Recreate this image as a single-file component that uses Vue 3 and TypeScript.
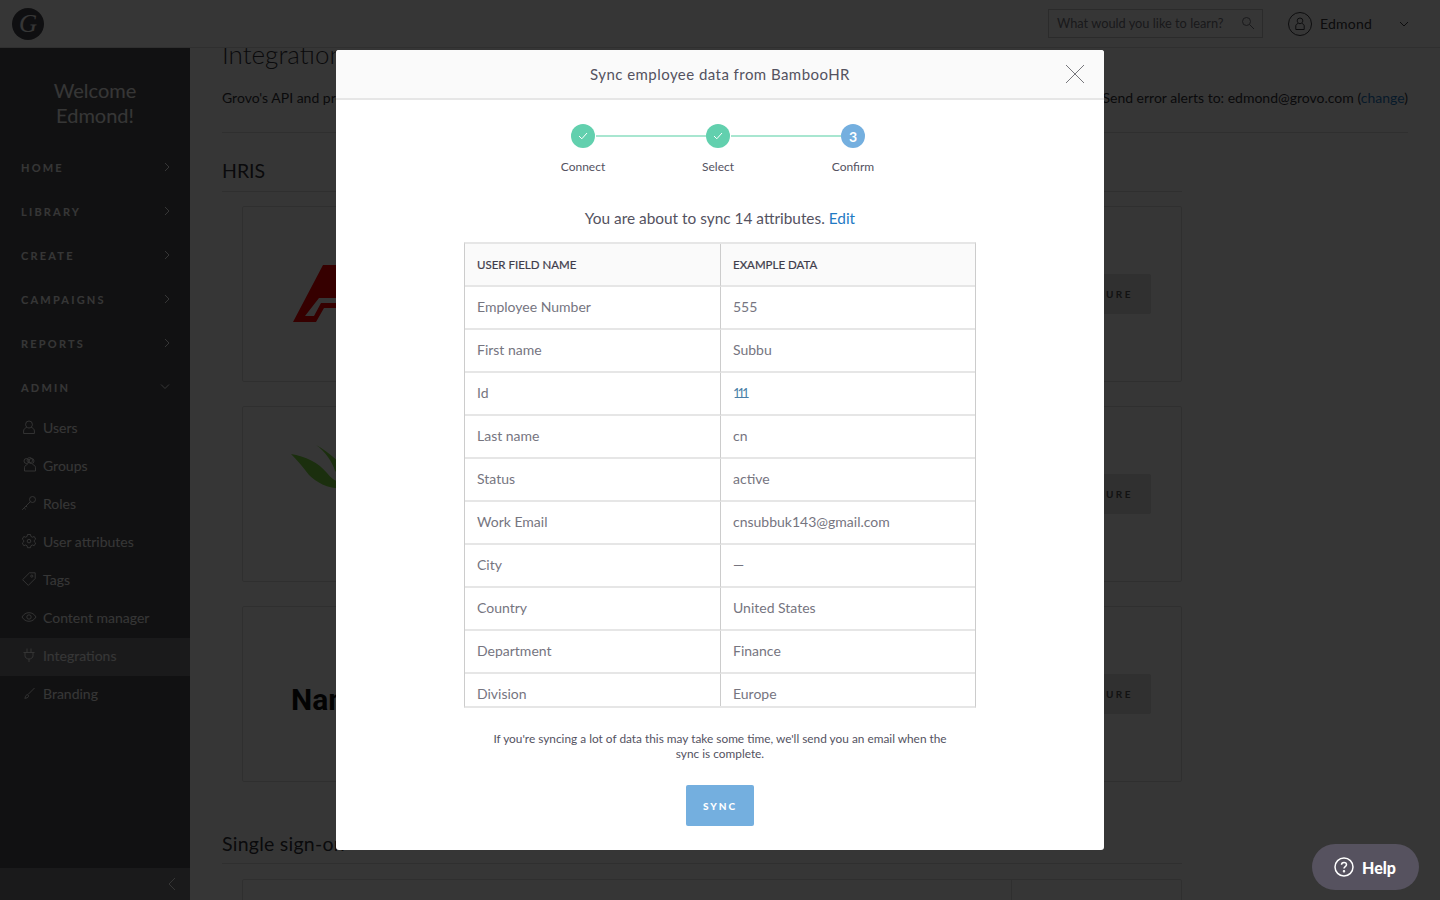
<script setup lang="ts">
interface NavItem {
  label: string;
  open?: boolean;
}

interface SubItem {
  label: string;
  icon: string;
  active?: boolean;
}

interface Step {
  label: string;
  done: boolean;
}

const navItems: NavItem[] = [
  { label: "Home" },
  { label: "Library" },
  { label: "Create" },
  { label: "Campaigns" },
  { label: "Reports" },
  { label: "Admin", open: true },
];

const subItems: SubItem[] = [
  { label: "Users", icon: "M8 2a3.400 3.400 0 0 1 3.400 3.400c0 1.900-1.500 3.600-3.400 3.600S4.600 7.300 4.600 5.400A3.400 3.400 0 0 1 8 2zM5.800 8.400C4 9 2.600 10.200 2.600 12v2.500h10.800V12c0-1.800-1.400-3-3.200-3.600" },
  { label: "Groups", icon: "M10.500 1.500a2.500 2.500 0 1 1 0 5 2.500 2.500 0 0 1 0-5zM5.500 1.500a2.500 2.500 0 1 0 0 5 2.500 2.500 0 0 0 0-5zM8.500 6a2.700 2.700 0 1 1 .5 0M6.500 7.500c-1.800.5-3 1.600-3 3.200v3.300h11v-3.300c0-1.600-1.200-2.700-3-3.200" },
  { label: "Roles", icon: "M11.500 1.500a3 3 0 1 1 0 6 3 3 0 0 1 0-6zM9.300 6.700 1.200 14.800M3.200 12.800l1.600 1.600M5 11l1.200 1.200" },
  { label: "User attributes", icon: "M6.500 1.500h3l.4 1.900 1.500.8 1.800-.7 1.500 2.600-1.400 1.200v1.600l1.400 1.200-1.500 2.600-1.800-.7-1.500.8-.4 1.900h-3l-.4-1.900-1.500-.8-1.800.7-1.500-2.600 1.400-1.200V7.300L1.300 6.100l1.500-2.600 1.800.7 1.500-.8zM8 6.300a1.800 1.800 0 1 0 0 3.600 1.800 1.800 0 0 0 0-3.600z" },
  { label: "Tags", icon: "M8.500 1.800h5.700v5.700L7.300 14.400 1.600 8.700zM10.800 4a1.100 1.100 0 1 0 0 2.200 1.100 1.100 0 0 0 0-2.200z" },
  { label: "Content manager", icon: "M1 8c1.700-2.800 4-4.300 7-4.300S13.300 5.200 15 8c-1.700 2.800-4 4.300-7 4.300S2.700 10.800 1 8zM8 5.800a2.200 2.200 0 1 0 0 4.400 2.200 2.200 0 0 0 0-4.400z" },
  { label: "Integrations", icon: "M6 1.500v4M10 1.500v4M2.500 5.500h11M4 5.500v3.200c0 2 1.800 3.300 4 3.300s4-1.300 4-3.300V5.500M8 12v3", active: true },
  { label: "Branding", icon: "M13.500 3 7 9.500M6.800 9.800C5 9.800 4.500 11 4.300 12.300l-.5 1 1.200-.2c1.400-.2 2.600-1 2.600-2.500z" },
];

const steps: Step[] = [
  { label: "Connect", done: true },
  { label: "Select", done: true },
  { label: "Confirm", done: false },
];

const attributes: [string, string][] = [
  ["Employee Number", "555"],
  ["First name", "Subbu"],
  ["Id", "111"],
  ["Last name", "cn"],
  ["Status", "active"],
  ["Work Email", "cnsubbuk143@gmail.com"],
  ["City", "—"],
  ["Country", "United States"],
  ["Department", "Finance"],
  ["Division", "Europe"],
];
</script>

<template>
  <div class="app">
    <header class="topbar">
      <div class="logo"><span>G</span></div>
      <div class="search">
        <span>What would you like to learn?</span>
        <svg width="14" height="14" viewBox="0 0 14 14" fill="none" stroke="currentColor">
          <circle cx="5.500" cy="5.500" r="4" />
          <path d="m8.500 8.500 4.500 4.500" />
        </svg>
      </div>
      <div class="user">
        <svg width="24" height="24" viewBox="0 0 24 24" fill="none" stroke="currentColor">
          <circle cx="12" cy="12" r="11.500" />
          <path d="M12 6a2.800 2.800 0 0 1 2.800 2.800c0 1.500-1.200 2.900-2.800 2.900s-2.800-1.400-2.800-2.900A2.800 2.800 0 0 1 12 6zM10 11.500c-1.400.4-2.200 1.300-2.200 2.500v3.500h8.400V14c0-1.200-.8-2.100-2.200-2.500" />
        </svg>
        <span class="user-name">Edmond</span>
        <svg class="user-chevron" width="10" height="6" viewBox="0 0 10 6" fill="none" stroke="currentColor">
          <path d="m1 1 4 4 4-4" />
        </svg>
      </div>
    </header>

    <div class="body">
      <aside class="sidebar">
        <div class="welcome">Welcome<br />Edmond!</div>
        <nav class="nav">
          <div v-for="item in navItems" :key="item.label" class="nav-item">
            <span>{{ item.label }}</span>
            <svg v-if="item.open" width="10" height="6" viewBox="0 0 10 6" fill="none" stroke="currentColor">
              <path d="m1 .5 4 4 4-4" />
            </svg>
            <svg v-else width="6" height="10" viewBox="0 0 6 10" fill="none" stroke="currentColor">
              <path d="m1 1 4 4-4 4" />
            </svg>
          </div>
        </nav>
        <div class="subnav">
          <div
            v-for="item in subItems"
            :key="item.label"
            class="sub-item"
            :class="{ active: item.active }"
          >
            <svg width="16" height="16" viewBox="0 0 16 16" fill="none" stroke="currentColor" stroke-width="0.9">
              <path :d="item.icon" />
            </svg>
            <span>{{ item.label }}</span>
          </div>
        </div>
        <div class="sidebar-foot">
          <svg width="8" height="14" viewBox="0 0 8 14" fill="none" stroke="currentColor">
            <path d="M7 1 1 7l6 6" />
          </svg>
        </div>
      </aside>

      <main class="main">
        <h1 class="page-title">Integrations</h1>
        <div class="page-intro">
          <span>Grovo's API and pre-built integrations connect your existing systems.</span>
          <span>Send error alerts to: edmond@grovo.com (<a class="page-link">change</a>)</span>
        </div>

        <section class="section">
          <h2>HRIS</h2>
          <div class="card">
            <svg class="logo-a" width="60" height="58" viewBox="0 0 60 58">
              <path d="M0 57 30 0H60V33H26L12 51H21L28 38H60V43H31L23 57z" fill="#f00" />
            </svg>
            <button class="configure">Configure</button>
          </div>
          <div class="card">
            <svg class="logo-leaf" width="60" height="50" viewBox="0 0 60 50">
              <path d="M0 9C14 11 28 18 36 28 40 33 44 36 50 38L60 38V43C40 46 26 38 18 30 12 22 6 15 0 9z" fill="#7fdc44" />
              <path d="M25 0C34 6 42 18 44 26L60 38V30C50 18 38 7 25 0z" fill="#7fdc44" />
            </svg>
            <button class="configure">Configure</button>
          </div>
          <div class="card">
            <span class="logo-namely">Namely</span>
            <button class="configure">Configure</button>
          </div>
        </section>

        <section class="section sso">
          <h2>Single sign-on</h2>
          <div class="card card-split"><div class="split"></div></div>
        </section>
      </main>
    </div>

    <div class="overlay">
      <div class="modal">
        <div class="modal-head">
          <span>Sync employee data from BambooHR</span>
          <svg class="close" width="20" height="20" viewBox="0 0 20 20" fill="none" stroke="currentColor">
            <path d="m1 1 18 18M19 1 1 19" />
          </svg>
        </div>

        <div class="stepper">
          <div v-for="(step, i) in steps" :key="step.label" class="step">
            <div class="step-dot" :class="{ done: step.done }">
              <svg v-if="step.done" width="10" height="8" viewBox="0 0 10 8" fill="none" stroke="#fff">
                <path d="m1 4 2.800 2.800L9 1" />
              </svg>
              <span v-else>{{ i + 1 }}</span>
            </div>
            <div class="step-label">{{ step.label }}</div>
          </div>
        </div>

        <p class="sync-intro">You are about to sync 14 attributes. <a>Edit</a></p>

        <div class="table-wrap">
          <table class="attr-table">
            <thead>
              <tr>
                <th>USER FIELD NAME</th>
                <th>EXAMPLE DATA</th>
              </tr>
            </thead>
            <tbody>
              <tr v-for="[name, value] in attributes" :key="name">
                <td>{{ name }}</td>
                <td :class="{ linked: name === 'Id' }">{{ value }}</td>
              </tr>
            </tbody>
          </table>
        </div>

        <p class="note">If you're syncing a lot of data this may take some time, we'll send you an email when the sync is complete.</p>

        <button class="sync">SYNC</button>
      </div>
    </div>

    <button class="help">
      <svg width="20" height="20" viewBox="0 0 20 20" fill="none" stroke="#fff" stroke-width="1.500">
        <circle cx="10" cy="10" r="9" />
        <path d="M7.500 7.800C7.500 6.300 8.600 5.500 10 5.500s2.500.9 2.500 2.200c0 1.900-2.500 1.900-2.500 3.800" />
        <circle cx="10" cy="14.300" r="0.500" />
      </svg>
      <span>Help</span>
    </button>
  </div>
</template>

<style>
html,
body {
  margin: 0;
  background: #fff;
}
</style>

<style scoped>
.app {
  position: relative;
  height: 900px;
  overflow: hidden;
  font-family: Lato, "Open Sans", sans-serif;
  color: #54525f;
}

.topbar {
  position: relative;
  z-index: 1;
  height: 48px;
  box-sizing: border-box;
  display: flex;
  align-items: center;
  padding: 0 31px 0 12px;
  background: #fff;
  border-bottom: 1px solid #ddd;
  color: #3a3a40;
}

.logo {
  width: 32px;
  height: 32px;
  border-radius: 50%;
  background: #4a4a50;
  display: flex;
  align-items: center;
  justify-content: center;
  color: #fff;
  font: italic 25px "Liberation Serif", serif;
}

.search {
  margin-left: auto;
  width: 215px;
  height: 29px;
  box-sizing: border-box;
  display: flex;
  align-items: center;
  justify-content: space-between;
  padding: 0 7px 1px 8px;
  border: 1px solid #ccc;
  font-size: 12.800px;
  color: #77777f;
}

.user {
  display: flex;
  align-items: center;
  margin-left: 25px;
  width: 121px;
}

.user-name {
  margin-left: 8px;
  padding-bottom: 1px;
  font-size: 14px;
  letter-spacing: 0.2px;
}

.user-chevron {
  margin-left: auto;
}

.body {
  display: flex;
  height: 852px;
}

.sidebar {
  position: relative;
  width: 190px;
  flex: none;
  display: flex;
  flex-direction: column;
  background: #505054;
  color: #fff;
}

.welcome {
  padding-top: 30px;
  text-align: center;
  font-size: 20px;
  line-height: 25px;
}

.nav {
  margin-top: 18px;
}

.nav-item {
  height: 44px;
  box-sizing: border-box;
  display: flex;
  align-items: center;
  justify-content: space-between;
  padding: 0 20px 2px 21px;
  font-size: 11px;
  font-weight: 700;
  letter-spacing: 2.200px;
  text-transform: uppercase;
}

.sub-item {
  height: 38px;
  box-sizing: border-box;
  display: flex;
  align-items: center;
  gap: 6px;
  padding: 0 0 4px 21px;
  font-size: 14px;
}

.sub-item.active {
  background: #7c7c82;
}

.sidebar-foot {
  margin-top: auto;
  height: 32px;
  background: #7c7c82;
  display: flex;
  align-items: center;
  justify-content: flex-end;
  padding-right: 14px;
}

.main {
  flex: 1;
  padding: 0 32px;
  margin-top: -14px;
  color: #33333a;
}

.page-title {
  margin: 0;
  height: 40px;
  font-size: 26px;
  font-weight: 300;
  line-height: 40px;
}

.page-intro {
  display: flex;
  justify-content: space-between;
  padding: 14px 0 24px;
  border-bottom: 1px solid #ddd;
  font-size: 14px;
  line-height: 20px;
}

.page-link {
  color: #1f7ac4;
}

.section {
  width: 960px;
}

.section h2 {
  margin: 0;
  padding: 24px 0 7px;
  border-bottom: 1px solid #ddd;
  font-size: 19.500px;
  font-weight: 400;
  line-height: 27px;
}

.card {
  position: relative;
  margin: 14px 0 24px 20px;
  height: 176px;
  box-sizing: border-box;
  display: flex;
  align-items: center;
  justify-content: space-between;
  padding: 0 30px 0 48px;
  border: 1px solid #ddd;
  border-radius: 2px;
}

.card + .card {
  margin-top: 24px;
}

.logo-a {
  margin-left: 2px;
}

.logo-leaf {
  margin-bottom: 49px;
}

.logo-namely {
  margin-top: 10px;
  font-family: Roboto, sans-serif;
  font-size: 30px;
  font-weight: 700;
  color: #111;
}

.configure {
  width: 130px;
  height: 40px;
  padding: 0 18px 0 0;
  border: 0;
  border-radius: 2px;
  margin-top: -1px;
  background: #e0e0e0;
  color: #555;
  text-align: right;
  font-family: inherit;
  font-size: 10px;
  font-weight: 700;
  letter-spacing: 2.500px;
  text-transform: uppercase;
}

.sso h2 {
  padding: 24px 0 6px;
  letter-spacing: 0.25px;
}

.sso .card {
  margin-top: 15px;
}

.card-split {
  padding: 0;
}

.split {
  position: absolute;
  top: 0;
  bottom: 0;
  left: 768px;
  border-left: 1px solid #ddd;
}

.overlay {
  position: absolute;
  inset: 0;
  z-index: 2;
  display: flex;
  align-items: center;
  justify-content: center;
  background: rgba(0, 0, 0, 0.79);
}

.modal {
  width: 768px;
  height: 800px;
  display: flex;
  flex-direction: column;
  align-items: center;
  background: #fff;
  border-radius: 3px;
  overflow: hidden;
}

.modal-head {
  position: relative;
  width: 100%;
  height: 50px;
  box-sizing: border-box;
  display: flex;
  align-items: center;
  justify-content: center;
  flex: none;
  background: #fafafa;
  border-bottom: 2px solid #e6e6e6;
  font-size: 15px;
  letter-spacing: 0.450px;
}

.close {
  position: absolute;
  right: 19px;
  top: 14px;
  color: #77777c;
}

.stepper {
  display: grid;
  grid-template-columns: repeat(3, 135px);
  margin: 24px 4px 0 0;
}

.step {
  position: relative;
  display: flex;
  flex-direction: column;
  align-items: center;
}

.step:not(:last-child)::after {
  content: "";
  position: absolute;
  top: 11px;
  left: calc(50% + 13px);
  width: 110px;
  height: 2px;
  background: #a8e6d0;
}

.step-dot {
  width: 24px;
  height: 24px;
  border-radius: 50%;
  display: flex;
  align-items: center;
  justify-content: center;
  background: #74afdf;
  color: #fff;
  font-size: 14px;
  font-weight: 700;
}

.step-dot.done {
  background: #62d0ae;
}

.step-label {
  margin-top: 12px;
  font-size: 12px;
  line-height: 14px;
}

.sync-intro {
  margin: 34px 0 14px;
  font-size: 15.400px;
  line-height: 20px;
}

.sync-intro a {
  color: #1f7ac4;
}

.table-wrap {
  width: 512px;
  height: 466px;
  box-sizing: border-box;
  flex: none;
  overflow: hidden;
  border-top: 2px solid #e6e6e6;
  border-bottom: 2px solid #e6e6e6;
  border-left: 1px solid #ccc;
  border-right: 1px solid #ccc;
}

.attr-table {
  width: 100%;
  table-layout: fixed;
  border-collapse: separate;
  border-spacing: 0;
}

.attr-table th,
.attr-table td {
  box-sizing: border-box;
  padding: 0 12px;
  text-align: left;
  border-bottom: 2px solid #e6e6e6;
}

.attr-table th + th,
.attr-table td + td {
  border-left: 1px solid #ccc;
}

.attr-table th {
  height: 43px;
  background: #fafafa;
  font-size: 11.500px;
  font-weight: 400;
  color: #3f3d4c;
  -webkit-text-stroke: 0.2px #3f3d4c;
}

.attr-table td {
  height: 43px;
  padding-bottom: 2px;
  font-size: 14px;
  color: #76757f;
}

.attr-table td.linked {
  color: #4a7fa8;
  letter-spacing: -3px;
  font-size: 13px;
}

.note {
  width: 470px;
  margin: 23px 0 24px;
  text-align: center;
  font-size: 11.850px;
  line-height: 15px;
}

.sync {
  width: 68px;
  height: 41px;
  flex: none;
  border: 0;
  border-radius: 2px;
  background: #74afdf;
  color: #fff;
  font-family: inherit;
  font-size: 10px;
  font-weight: 900;
  letter-spacing: 2px;
}

.help {
  position: absolute;
  right: 21px;
  bottom: 10px;
  z-index: 3;
  width: 107px;
  height: 46px;
  display: flex;
  align-items: center;
  gap: 8px;
  padding: 0 0 0 22px;
  border: 0;
  border-radius: 23px;
  background: #56525f;
  color: #fff;
  font-family: inherit;
  font-size: 16px;
  font-weight: 900;
}
</style>
